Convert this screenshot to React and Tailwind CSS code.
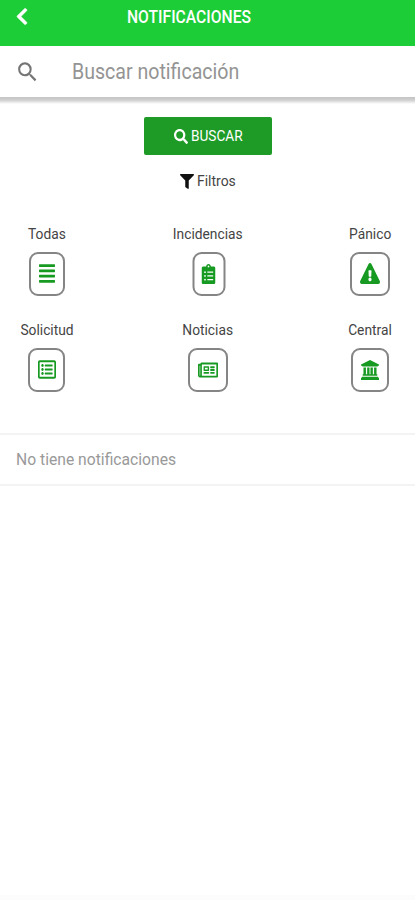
import {
  FaChevronLeft,
  FaSearch,
  FaFilter,
  FaAlignJustify,
  FaClipboardList,
  FaExclamationTriangle,
  FaRegListAlt,
  FaRegNewspaper,
} from "react-icons/fa";
import { MdSearch } from "react-icons/md";

function BankIcon({ className }) {
  return (
    <svg viewBox="0 0 19 21" preserveAspectRatio="none" fill="currentColor" className={className}>
      <path d="M9.5 0 19 4.6V6h-1.3v.9H1.3V6H0V4.6z" />
      <path d="M2.6 8h2.6v7h1.3V8H9v7h1V8h2.5v7h1.3V8h2.6v7h.8v1.5H1.8V15h.8z" />
      <path d="M.9 17.6h17.2v1H19V21H0v-2.4h.9z" />
    </svg>
  );
}

const filters = [
  { label: "Todas", Icon: FaAlignJustify, box: "w-9", icon: "w-4 h-[21px]" },
  { label: "Incidencias", Icon: FaClipboardList, box: "w-[33px] translate-x-[0.5px]", icon: "w-[14px] h-5" },
  { label: "Pánico", Icon: FaExclamationTriangle, box: "w-10", icon: "w-5 h-[21px]" },
  { label: "Solicitud", Icon: FaRegListAlt, box: "w-[37px]", icon: "w-[18px] h-[21px]" },
  { label: "Noticias", Icon: FaRegNewspaper, box: "w-10", icon: "w-[20px] h-[20px]" },
  { label: "Central", Icon: BankIcon, box: "w-[38px]", icon: "w-[18px] h-5" },
];

function Filter({ label, Icon, box, icon }) {
  return (
    <button className="flex h-24 flex-col items-center">
      <span className="h-[18px] scale-x-[0.95] whitespace-nowrap text-[14.5px] leading-[18px] text-[#444]">{label}</span>
      <span className={`mt-2 flex h-11 items-center justify-center rounded-[9px] border-2 border-[#858585] ${box}`}>
        <Icon preserveAspectRatio="none" className={`-mt-px text-[#179a22] ${icon}`} />
      </span>
    </button>
  );
}

export default function App() {
  return (
    <main className="flex h-[900px] w-full flex-col overflow-hidden bg-white font-[Roboto,sans-serif]">
      <header className="flex h-[46px] shrink-0 bg-[#1dcd37] text-white">
        <FaChevronLeft preserveAspectRatio="none" className="ml-4 mt-[7px] h-[19px] w-3 stroke-[16px]" />
        <h1 className="ml-[99px] mt-[6px] h-5 w-[124px] origin-left scale-x-[0.895] whitespace-nowrap text-[17.5px] font-medium leading-[22px]">
          NOTIFICACIONES
        </h1>
      </header>
      <div className="flex h-[51px] shrink-0 items-center">
        <MdSearch preserveAspectRatio="none" className="ml-[15px] h-[26px] w-[25px] text-[#757575]" />
        <span className="ml-8 origin-left scale-x-[0.91] whitespace-nowrap text-[21.5px] leading-6 text-[#949494]">
          Buscar notificación
        </span>
      </div>
      <div className="h-[7px] shrink-0 bg-linear-to-b from-[#c4c4c4] via-[#d0d0d0] via-45% to-white" />
      <div className="flex shrink-0 flex-col items-center pt-[13px]">
        <button className="flex h-[38px] w-32 items-center justify-center gap-[3px] rounded-[2px] bg-[#1e9b27] text-white">
          <FaSearch preserveAspectRatio="none" className="h-[15px] w-[14px]" />
          <span className="w-[51px] origin-left scale-x-[0.91] whitespace-nowrap text-left text-[15px] leading-5">BUSCAR</span>
        </button>
        <div className="mt-[16px] flex h-5 items-center gap-[3px]">
          <FaFilter preserveAspectRatio="none" className="h-[15px] w-[14px] text-[#111]" />
          <span className="w-[38px] origin-left scale-x-[0.93] whitespace-nowrap text-[15px] leading-5 text-[#444]">Filtros</span>
        </div>
      </div>
      <section className="mt-[35px] grid h-[207px] shrink-0 grid-cols-[93px_230px_94px] content-start">
        {filters.map((f) => (
          <Filter key={f.label} {...f} />
        ))}
      </section>
      <div className="flex h-[53px] shrink-0 items-center border-y-2 border-[#f3f3f3] pb-px pl-4">
        <p className="origin-left scale-x-[0.922] whitespace-nowrap text-[17px] leading-5 text-[#999]">No tiene notificaciones</p>
      </div>
      <footer className="mt-auto h-[5px] bg-[#fcfcfc]" />
    </main>
  );
}
